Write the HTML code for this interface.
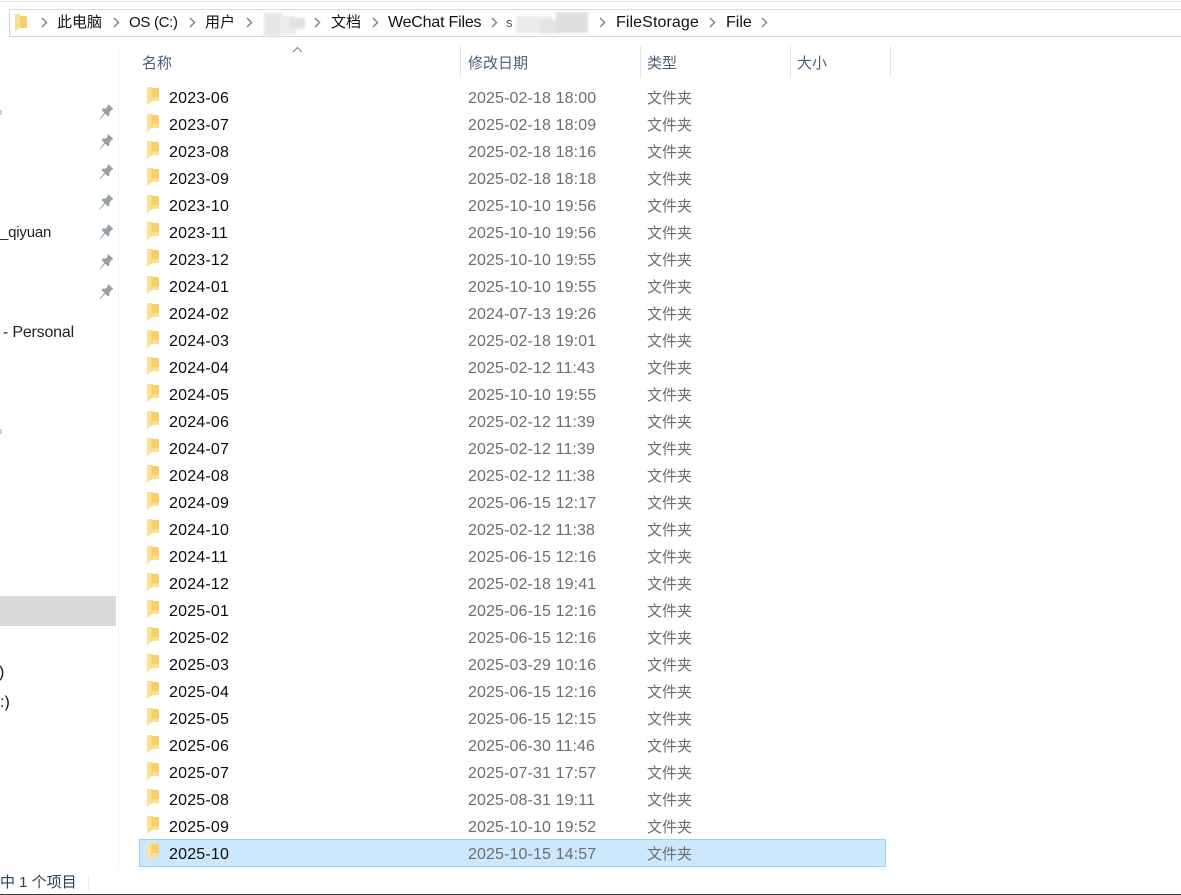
<!DOCTYPE html>
<html><head><meta charset="utf-8"><style>
html,body{margin:0;padding:0;background:#fff}
body{width:1181px;height:895px;position:relative;overflow:hidden;font-family:"Liberation Sans","Noto Sans CJK SC",sans-serif;font-size:16px;color:#111}
.a{position:absolute;white-space:nowrap;line-height:20px}
.r{position:absolute;left:0;width:900px;height:27px}
.r span{position:absolute;top:5px;line-height:20px;white-space:nowrap}
.n{left:169px;letter-spacing:.2px;color:#0c0c0c}
.d{left:468px;color:#6d6d6d;letter-spacing:.12px}
.t{left:647px;color:#6d6d6d;font-size:15px}
.r svg{position:absolute;left:147px;top:3px}
.h{color:#4c607a;font-size:15px;top:54px}
.c{position:absolute;top:17px}
.v{position:absolute;top:46px;width:1px;height:32px;background:#e5e5e5}
.p{position:absolute;left:98px}
.b{position:absolute;filter:blur(1px)}
</style></head><body>
<div style="position:absolute;left:0;top:1px;width:1181px;height:1px;background:#e3e3e3"></div>
<div style="position:absolute;left:9px;top:9px;width:1172px;height:26px;border:1px solid #d9d9d9;border-right:0"></div>
<svg style="position:absolute;left:15px;top:14px" width="13" height="17" viewBox="0 0 13 17"><path d="M0 0h5v2h6l1 1v11H5l-5 3z" fill="#f6cf6a"/><path d="M0 0h5v14l-5 3z" fill="#fbe08f"/></svg>
<svg class="c" style="left:40px" width="9" height="11" viewBox="0 0 9 11"><path d="M2 1l4.500 4.500L2 10" fill="none" stroke="#858585" stroke-width="1.500"/></svg>
<div class="a" style="left:57px;top:13px;font-size:15px">此电脑</div>
<svg class="c" style="left:112px" width="9" height="11" viewBox="0 0 9 11"><path d="M2 1l4.500 4.500L2 10" fill="none" stroke="#858585" stroke-width="1.500"/></svg>
<div class="a" style="left:129px;top:13px;font-size:15px;letter-spacing:-.3px">OS (C:)</div>
<svg class="c" style="left:188px" width="9" height="11" viewBox="0 0 9 11"><path d="M2 1l4.500 4.500L2 10" fill="none" stroke="#858585" stroke-width="1.500"/></svg>
<div class="a" style="left:205px;top:13px;font-size:15px">用户</div>
<svg class="c" style="left:245px" width="9" height="11" viewBox="0 0 9 11"><path d="M2 1l4.500 4.500L2 10" fill="none" stroke="#858585" stroke-width="1.500"/></svg>
<div class="b" style="left:264px;top:13px;width:18px;height:23px;background:#e6e6e6"></div>
<div class="b" style="left:280px;top:16px;width:16px;height:19px;background:#ededed"></div>
<div class="b" style="left:290px;top:18px;width:15px;height:11px;background:#e2e2e2"></div>
<svg class="c" style="left:313px" width="9" height="11" viewBox="0 0 9 11"><path d="M2 1l4.500 4.500L2 10" fill="none" stroke="#858585" stroke-width="1.500"/></svg>
<div class="a" style="left:331px;top:13px;font-size:15px">文档</div>
<svg class="c" style="left:371px" width="9" height="11" viewBox="0 0 9 11"><path d="M2 1l4.500 4.500L2 10" fill="none" stroke="#858585" stroke-width="1.500"/></svg>
<div class="a" style="left:388px;top:13px;letter-spacing:-.2px">WeChat Files</div>
<svg class="c" style="left:490px" width="9" height="11" viewBox="0 0 9 11"><path d="M2 1l4.500 4.500L2 10" fill="none" stroke="#858585" stroke-width="1.500"/></svg>
<div class="a" style="left:506px;top:13px;color:#555;font-size:13px">s</div>
<div class="b" style="left:516px;top:16px;width:36px;height:17px;background:#ebebeb"></div>
<div class="b" style="left:540px;top:20px;width:20px;height:13px;background:#e4e4e4"></div>
<div class="b" style="left:556px;top:12px;width:32px;height:21px;background:#dfdfdf"></div>
<svg class="c" style="left:598px" width="9" height="11" viewBox="0 0 9 11"><path d="M2 1l4.500 4.500L2 10" fill="none" stroke="#858585" stroke-width="1.500"/></svg>
<div class="a" style="left:616px;top:13px;letter-spacing:.1px">FileStorage</div>
<svg class="c" style="left:708px" width="9" height="11" viewBox="0 0 9 11"><path d="M2 1l4.500 4.500L2 10" fill="none" stroke="#858585" stroke-width="1.500"/></svg>
<div class="a" style="left:726px;top:13px">File</div>
<svg class="c" style="left:760px" width="9" height="11" viewBox="0 0 9 11"><path d="M2 1l4.500 4.500L2 10" fill="none" stroke="#858585" stroke-width="1.500"/></svg>

<div style="position:absolute;left:118px;top:46px;width:1px;height:822px;background:#f3f3f3"></div>
<svg style="position:absolute;left:292px;top:46px" width="11" height="7" viewBox="0 0 11 7"><path d="M1 6l4.500-4.500L10 6" fill="none" stroke="#7d7d7d"/></svg>
<div class="a h" style="left:142px">名称</div>
<div class="a h" style="left:468px">修改日期</div>
<div class="a h" style="left:647px">类型</div>
<div class="a h" style="left:797px">大小</div>
<div class="v" style="left:460px"></div><div class="v" style="left:640px"></div><div class="v" style="left:790px"></div><div class="v" style="left:890px"></div>

<div style="position:absolute;left:0;top:110px;width:2px;height:5px;background:#a5e2f8"></div>
<div style="position:absolute;left:0;top:429px;width:2px;height:5px;background:#a5e2f8"></div>
<svg width="0" height="0" style="position:absolute"><defs>
<g id="f"><path d="M0 0h5l1 1h5l1 1v12H5l-5 4z" fill="#f6cf6a"/><path d="M5 10h7v4H5z" fill="#fbdf90"/><path d="M0 0h4.500v14L0 18z" fill="#fbe294"/></g>
<g id="q"><path d="M9 0L14.500 5 12.500 6 10.500 8.500 10.500 11 9 12.500 6.200 9.600 1 15.500 .5 15 5.400 8.800 2.500 6 4 4.500 7 4.500 8.500 2.500z" fill="#98a0a7"/></g>
</defs></svg>
<svg class="p" style="top:104px;left:99px" width="15" height="16"><use href="#q"/></svg>
<svg class="p" style="top:134px;left:99px" width="15" height="16"><use href="#q"/></svg>
<svg class="p" style="top:164px;left:99px" width="15" height="16"><use href="#q"/></svg>
<svg class="p" style="top:194px;left:99px" width="15" height="16"><use href="#q"/></svg>
<svg class="p" style="top:224px;left:99px" width="15" height="16"><use href="#q"/></svg>
<svg class="p" style="top:254px;left:99px" width="15" height="16"><use href="#q"/></svg>
<svg class="p" style="top:284px;left:99px" width="15" height="16"><use href="#q"/></svg>
<div class="a" style="left:0;top:223px;color:#222;font-size:15px;letter-spacing:-.2px">_qiyuan</div>
<div class="a" style="left:3px;top:323px;color:#222;letter-spacing:-.2px">- Personal</div>
<div style="position:absolute;left:0;top:596px;width:116px;height:30px;background:#d9d9d9"></div>
<div class="a" style="left:-1px;top:663px">)</div>
<div class="a" style="left:0;top:693px">:)</div>

<div class="r" style="top:84px"><svg width="13" height="18"><use href="#f"/></svg><span class="n">2023-06</span><span class="d">2025-02-18 18:00</span><span class="t">文件夹</span></div>
<div class="r" style="top:111px"><svg width="13" height="18"><use href="#f"/></svg><span class="n">2023-07</span><span class="d">2025-02-18 18:09</span><span class="t">文件夹</span></div>
<div class="r" style="top:138px"><svg width="13" height="18"><use href="#f"/></svg><span class="n">2023-08</span><span class="d">2025-02-18 18:16</span><span class="t">文件夹</span></div>
<div class="r" style="top:165px"><svg width="13" height="18"><use href="#f"/></svg><span class="n">2023-09</span><span class="d">2025-02-18 18:18</span><span class="t">文件夹</span></div>
<div class="r" style="top:192px"><svg width="13" height="18"><use href="#f"/></svg><span class="n">2023-10</span><span class="d">2025-10-10 19:56</span><span class="t">文件夹</span></div>
<div class="r" style="top:219px"><svg width="13" height="18"><use href="#f"/></svg><span class="n">2023-11</span><span class="d">2025-10-10 19:56</span><span class="t">文件夹</span></div>
<div class="r" style="top:246px"><svg width="13" height="18"><use href="#f"/></svg><span class="n">2023-12</span><span class="d">2025-10-10 19:55</span><span class="t">文件夹</span></div>
<div class="r" style="top:273px"><svg width="13" height="18"><use href="#f"/></svg><span class="n">2024-01</span><span class="d">2025-10-10 19:55</span><span class="t">文件夹</span></div>
<div class="r" style="top:300px"><svg width="13" height="18"><use href="#f"/></svg><span class="n">2024-02</span><span class="d">2024-07-13 19:26</span><span class="t">文件夹</span></div>
<div class="r" style="top:327px"><svg width="13" height="18"><use href="#f"/></svg><span class="n">2024-03</span><span class="d">2025-02-18 19:01</span><span class="t">文件夹</span></div>
<div class="r" style="top:354px"><svg width="13" height="18"><use href="#f"/></svg><span class="n">2024-04</span><span class="d">2025-02-12 11:43</span><span class="t">文件夹</span></div>
<div class="r" style="top:381px"><svg width="13" height="18"><use href="#f"/></svg><span class="n">2024-05</span><span class="d">2025-10-10 19:55</span><span class="t">文件夹</span></div>
<div class="r" style="top:408px"><svg width="13" height="18"><use href="#f"/></svg><span class="n">2024-06</span><span class="d">2025-02-12 11:39</span><span class="t">文件夹</span></div>
<div class="r" style="top:435px"><svg width="13" height="18"><use href="#f"/></svg><span class="n">2024-07</span><span class="d">2025-02-12 11:39</span><span class="t">文件夹</span></div>
<div class="r" style="top:462px"><svg width="13" height="18"><use href="#f"/></svg><span class="n">2024-08</span><span class="d">2025-02-12 11:38</span><span class="t">文件夹</span></div>
<div class="r" style="top:489px"><svg width="13" height="18"><use href="#f"/></svg><span class="n">2024-09</span><span class="d">2025-06-15 12:17</span><span class="t">文件夹</span></div>
<div class="r" style="top:516px"><svg width="13" height="18"><use href="#f"/></svg><span class="n">2024-10</span><span class="d">2025-02-12 11:38</span><span class="t">文件夹</span></div>
<div class="r" style="top:543px"><svg width="13" height="18"><use href="#f"/></svg><span class="n">2024-11</span><span class="d">2025-06-15 12:16</span><span class="t">文件夹</span></div>
<div class="r" style="top:570px"><svg width="13" height="18"><use href="#f"/></svg><span class="n">2024-12</span><span class="d">2025-02-18 19:41</span><span class="t">文件夹</span></div>
<div class="r" style="top:597px"><svg width="13" height="18"><use href="#f"/></svg><span class="n">2025-01</span><span class="d">2025-06-15 12:16</span><span class="t">文件夹</span></div>
<div class="r" style="top:624px"><svg width="13" height="18"><use href="#f"/></svg><span class="n">2025-02</span><span class="d">2025-06-15 12:16</span><span class="t">文件夹</span></div>
<div class="r" style="top:651px"><svg width="13" height="18"><use href="#f"/></svg><span class="n">2025-03</span><span class="d">2025-03-29 10:16</span><span class="t">文件夹</span></div>
<div class="r" style="top:678px"><svg width="13" height="18"><use href="#f"/></svg><span class="n">2025-04</span><span class="d">2025-06-15 12:16</span><span class="t">文件夹</span></div>
<div class="r" style="top:705px"><svg width="13" height="18"><use href="#f"/></svg><span class="n">2025-05</span><span class="d">2025-06-15 12:15</span><span class="t">文件夹</span></div>
<div class="r" style="top:732px"><svg width="13" height="18"><use href="#f"/></svg><span class="n">2025-06</span><span class="d">2025-06-30 11:46</span><span class="t">文件夹</span></div>
<div class="r" style="top:759px"><svg width="13" height="18"><use href="#f"/></svg><span class="n">2025-07</span><span class="d">2025-07-31 17:57</span><span class="t">文件夹</span></div>
<div class="r" style="top:786px"><svg width="13" height="18"><use href="#f"/></svg><span class="n">2025-08</span><span class="d">2025-08-31 19:11</span><span class="t">文件夹</span></div>
<div class="r" style="top:813px"><svg width="13" height="18"><use href="#f"/></svg><span class="n">2025-09</span><span class="d">2025-10-10 19:52</span><span class="t">文件夹</span></div>
<div style="position:absolute;left:139px;top:839px;width:747px;height:28px;box-sizing:border-box;background:#cce8ff;border:1px solid #99d1ff"></div>
<div class="r" style="top:840px"><svg width="13" height="18"><use href="#f"/></svg><span class="n">2025-10</span><span class="d">2025-10-15 14:57</span><span class="t">文件夹</span></div>

<div class="a" style="left:0;top:873px;font-size:15px;color:#2f4358">中 1 个项目</div>
<div style="position:absolute;left:88px;top:875px;width:1px;height:16px;background:#eee"></div>
<div style="position:absolute;left:0;top:894px;width:1181px;height:1px;background:#3a3a3a"></div>
</body></html>
